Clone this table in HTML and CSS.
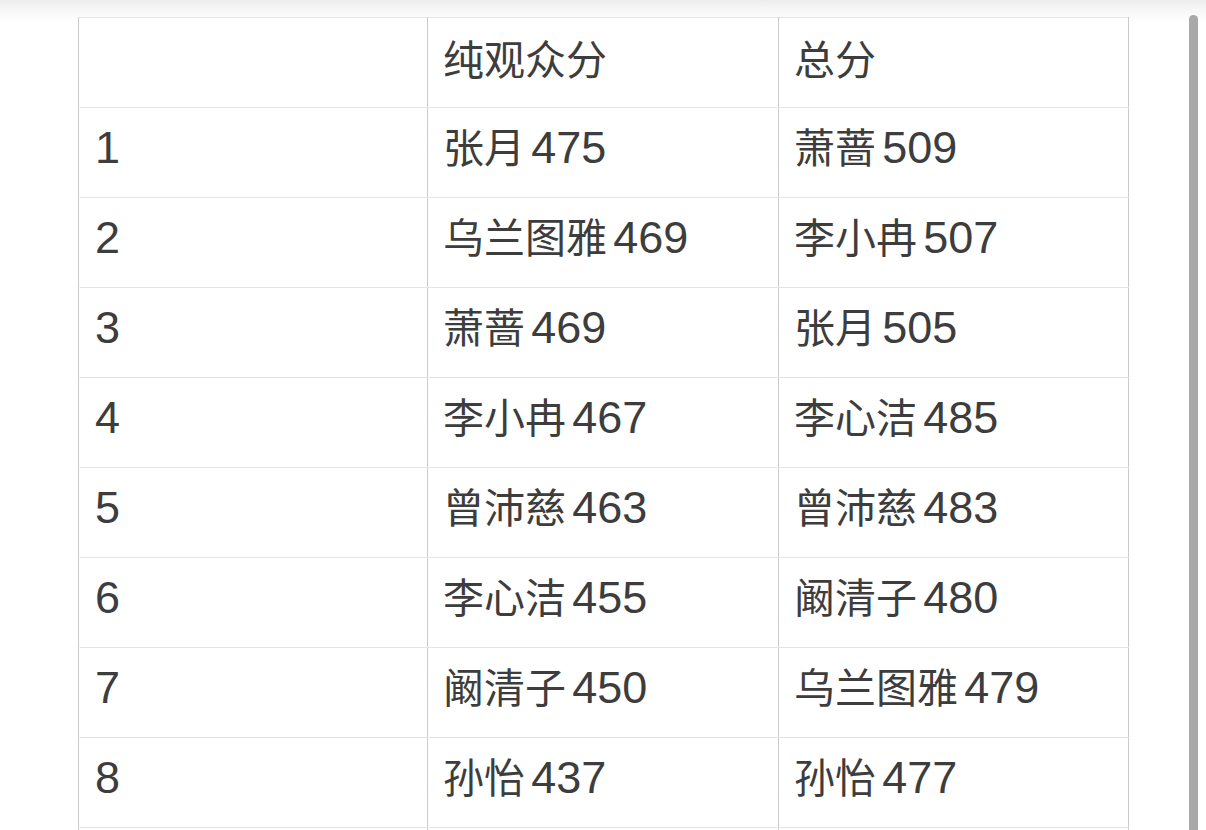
FILE: index.html
```html
<!DOCTYPE html>
<html lang="zh">
<head>
<meta charset="utf-8">
<link rel="stylesheet" href="styles.css">
</head>
<body>
<div class="page">
  <div class="topshade"></div>
  <div class="content">
    <table class="scores">
      <colgroup>
        <col class="c-rank">
        <col class="c-aud">
        <col class="c-total">
      </colgroup>
      <thead>
        <tr><th></th><th>纯观众分</th><th>总分</th></tr>
      </thead>
      <tbody>
        <tr><td><span class="num">1</span></td><td>张月 <span class="num">475</span></td><td>萧蔷 <span class="num">509</span></td></tr>
        <tr><td><span class="num">2</span></td><td>乌兰图雅 <span class="num">469</span></td><td>李小冉 <span class="num">507</span></td></tr>
        <tr><td><span class="num">3</span></td><td>萧蔷 <span class="num">469</span></td><td>张月 <span class="num">505</span></td></tr>
        <tr><td><span class="num">4</span></td><td>李小冉 <span class="num">467</span></td><td>李心洁 <span class="num">485</span></td></tr>
        <tr><td><span class="num">5</span></td><td>曾沛慈 <span class="num">463</span></td><td>曾沛慈 <span class="num">483</span></td></tr>
        <tr><td><span class="num">6</span></td><td>李心洁 <span class="num">455</span></td><td>阚清子 <span class="num">480</span></td></tr>
        <tr><td><span class="num">7</span></td><td>阚清子 <span class="num">450</span></td><td>乌兰图雅 <span class="num">479</span></td></tr>
        <tr><td><span class="num">8</span></td><td>孙怡 <span class="num">437</span></td><td>孙怡 <span class="num">477</span></td></tr>
        <tr><td></td><td></td><td></td></tr>
      </tbody>
    </table>
    <div class="scrollbar"></div>
  </div>
</div>
</body>
</html>
```
FILE: styles.css
```css
html, body {
  margin: 0;
  padding: 0;
  background: #ffffff;
  overflow: hidden;
}
.page {
  position: relative;
  width: 1206px;
  height: 830px;
  overflow: hidden;
  background: #ffffff;
}
.topshade {
  position: absolute;
  left: 0;
  top: 0;
  width: 100%;
  height: 22px;
  background: linear-gradient(to bottom, #ececec 0%, #f6f6f6 40%, rgba(255,255,255,0) 100%);
}
.content {
  position: relative;
  display: flex;
  align-items: flex-start;
  padding: 17px 0 0 78px;
}
.scores {
  border-collapse: collapse;
  width: 1050px;
  table-layout: fixed;
  font-family: "Noto Sans CJK SC", sans-serif;
  font-size: 41px;
  line-height: 1.2;
  color: #3d3d3d;
  background: #ffffff;
}
.c-rank { width: 349px; }
.c-aud { width: 351px; }
.c-total { width: 350px; }
.scores th,
.scores td {
  height: 80px;
  padding: 0 14px 9px 15px;
  text-align: left;
  font-weight: normal;
  vertical-align: middle;
  border-top: 1px solid #e4e4e4;
  border-bottom: 1px solid #e4e4e4;
  border-left: 1px solid #cbcbcb;
  border-right: 1px solid #cbcbcb;
  white-space: nowrap;
  word-spacing: -3px;
}
.scores td:first-child {
  padding-left: 16px;
}
.num {
  font-family: "Liberation Sans", sans-serif;
  font-size: 45px;
  word-spacing: normal;
}
.scrollbar {
  width: 9px;
  height: 840px;
  margin-left: 60px;
  margin-top: -2px;
  background: #a9a9a9;
  border-radius: 5px 5px 0 0;
}
```
